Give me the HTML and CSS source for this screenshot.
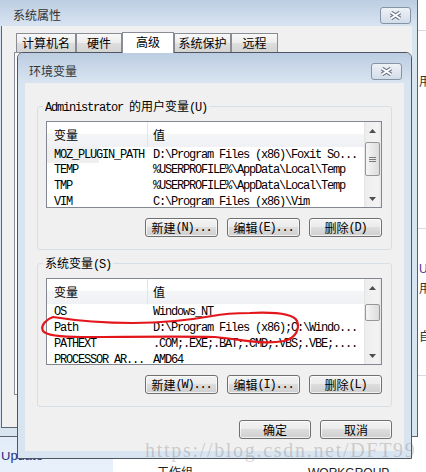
FILE: index.html
```html
<!DOCTYPE html>
<html lang="zh-CN">
<head>
<meta charset="utf-8">
<title>环境变量</title>
<link rel="stylesheet" href="styles.css">
</head>
<body>
<div class="backdrop">
  <div class="bd-top">
    <div class="peek">
      <div class="pk-line l1"></div>
      <div class="pk f1">用</div>
      <div class="pk-line l2"></div>
      <div class="pk f2">U</div>
      <div class="pk f3">用</div>
      <div class="pk f4">自</div>
      <div class="pk-line l3"></div>
    </div>
  </div>
  <div class="bd-bottom">
    <div class="nav"><div class="upd"><span>Update</span></div></div>
    <div class="main-area"><span class="wg-l">工作组</span><span class="wg-v">WORKGROUP</span></div>
  </div>
</div>

<div class="win outer">
  <div class="titlebar">
    <span class="title">系统属性</span>
    <span class="close"><svg width="13" height="9" viewBox="0 0 13 9"><path d="M2 1.5 L11 7.5 M11 1.5 L2 7.5" stroke="#6a7587" stroke-width="4"/><path d="M2 1.5 L11 7.5 M11 1.5 L2 7.5" stroke="#fff" stroke-width="2"/></svg></span>
  </div>
  <div class="client oc">
    <div class="tabs">
      <span class="tab t1">计算机名</span>
      <span class="tab t2">硬件</span>
      <span class="tab sel">高级</span>
      <span class="tab t4">系统保护</span>
      <span class="tab t5">远程</span>
    </div>
    <div class="pane"></div>
  </div>
</div>

<div class="win inner">
  <div class="titlebar">
    <span class="title">环境变量</span>
    <span class="close"><svg width="13" height="9" viewBox="0 0 13 9"><path d="M2 1.5 L11 7.5 M11 1.5 L2 7.5" stroke="#6a7587" stroke-width="4"/><path d="M2 1.5 L11 7.5 M11 1.5 L2 7.5" stroke="#fff" stroke-width="2"/></svg></span>
  </div>
  <div class="client ic">
    <div class="group">
      <div class="legend"><span class="m">Administrator </span>的用户变量<span class="m">(U)</span></div>
      <div class="list">
        <div class="lv">
          <div class="hdr"><span class="c1">变量</span><span class="c2">值</span></div>
          <div class="row sel"><span class="c1 m">MOZ_PLUGIN_PATH</span><span class="c2 m">D:\Program Files (x86)\Foxit So...</span></div>
          <div class="row"><span class="c1 m">TEMP</span><span class="c2 m">%USERPROFILE%\AppData\Local\Temp</span></div>
          <div class="row"><span class="c1 m">TMP</span><span class="c2 m">%USERPROFILE%\AppData\Local\Temp</span></div>
          <div class="row"><span class="c1 m">VIM</span><span class="c2 m">C:\Program Files (x86)\Vim</span></div>
        </div>
        <div class="sb">
          <div class="arr"><svg width="7" height="4" viewBox="0 0 7 4"><path d="M0 4 L3.5 0 L7 4Z" fill="#4f4f4f"/></svg></div>
          <div class="thumb th1"><svg width="7" height="5" viewBox="0 0 7 5"><path d="M0 0.5H7M0 2.5H7M0 4.5H7" stroke="#7a7a7a" stroke-width="1"/></svg></div>
          <div class="sp"></div>
          <div class="arr"><svg width="7" height="4" viewBox="0 0 7 4"><path d="M0 0 L3.5 4 L7 0Z" fill="#4f4f4f"/></svg></div>
        </div>
      </div>
      <div class="btns">
        <span class="btn">新建<span class="m">(N)...</span></span>
        <span class="btn">编辑<span class="m">(E)...</span></span>
        <span class="btn">删除<span class="m">(D)</span></span>
      </div>
    </div>

    <div class="group">
      <div class="legend">系统变量<span class="m">(S)</span></div>
      <div class="list">
        <div class="lv">
          <div class="hdr"><span class="c1">变量</span><span class="c2">值</span></div>
          <div class="row"><span class="c1 m">OS</span><span class="c2 m">Windows_NT</span></div>
          <div class="row"><span class="c1 m">Path</span><span class="c2 m">D:\Program Files (x86);C:\Windo...</span></div>
          <div class="row"><span class="c1 m">PATHEXT</span><span class="c2 m">.COM;.EXE;.BAT;.CMD;.VBS;.VBE;....</span></div>
          <div class="row"><span class="c1 m">PROCESSOR_AR...</span><span class="c2 m">AMD64</span></div>
        </div>
        <div class="sb">
          <div class="arr"><svg width="7" height="4" viewBox="0 0 7 4"><path d="M0 4 L3.5 0 L7 4Z" fill="#4f4f4f"/></svg></div>
          <div class="thumb th2"></div>
          <div class="sp"></div>
          <div class="arr"><svg width="7" height="4" viewBox="0 0 7 4"><path d="M0 0 L3.5 4 L7 0Z" fill="#4f4f4f"/></svg></div>
        </div>
      </div>
      <div class="btns">
        <span class="btn">新建<span class="m">(W)...</span></span>
        <span class="btn">编辑<span class="m">(I)...</span></span>
        <span class="btn">删除<span class="m">(L)</span></span>
      </div>
    </div>

    <div class="foot">
      <span class="btn">确定</span>
      <span class="btn">取消</span>
    </div>
  </div>
</div>

<svg class="scribble" width="426" height="472" viewBox="0 0 426 472">
  <path d="M53 317 C47 319 40 325 43 331 C47 336 62 337 82 337 C120 337 180 336 215 337 C240 339 262 345 284 341 C296 338 300 329 297 321 C293 313 272 312 250 313 C232 313 222 314 212 316 C190 320 160 323 133 323 C100 323 72 320 53 317" fill="none" stroke="#e3161c" stroke-width="2.2" stroke-linecap="round"/>
</svg>

<div class="wm">https://blog.csdn.net/DFT99</div>
</body>
</html>
```

FILE: styles.css
```css
* { box-sizing: border-box; }
html, body { margin: 0; padding: 0; }
body {
  width: 426px;
  height: 472px;
  overflow: hidden;
  position: relative;
  background: #fff;
  font-family: "Noto Sans CJK SC", "Liberation Sans", sans-serif;
  font-size: 12px;
  color: #000;
}
.m {
  font-family: "Liberation Mono", "Noto Sans CJK SC", monospace;
  font-size: 12px;
  letter-spacing: -1.2px;
}

/* background window */
.backdrop { position: absolute; inset: 0; display: flex; flex-direction: column; }
.bd-top { height: 437px; display: flex; justify-content: flex-end; }
.peek { width: 8px; display: flex; flex-direction: column; overflow: hidden; padding-left: 1px; }
.pk-line { height: 1px; background: #d3dae3; margin-left: -1px; }
.pk { font-size: 12px; line-height: 12px; white-space: nowrap; color: #333; }
.l1 { margin-top: 30px; }
.f1 { margin-top: 44px; }
.l2 { margin-top: 141px; }
.f2 { margin-top: 34px; color: #4a3a8a; font-family: "Liberation Sans", sans-serif; }
.f3 { margin-top: 7px; }
.f4 { margin-top: 36px; }
.l3 { margin-top: 33px; }
.bd-bottom { height: 35px; display: flex; }
.nav { width: 113px; background: linear-gradient(#e2ecf8, #e8f1fb); }
.upd { margin-top: 15px; height: 20px; overflow: hidden; }
.upd span { display: block; margin-top: -3px; line-height: 13px; font-family: "Liberation Sans", sans-serif; font-size: 13px; color: #26307e; padding-left: 1px; }
.main-area { flex: 1; display: flex; align-items: flex-start; padding: 28px 0 0 44px; }
.wg-l { line-height: 14px; color: #222; }
.wg-v { margin: 1px 0 0 115px; line-height: 14px; font-family: "Liberation Sans", sans-serif; font-size: 12px; color: #222; }

/* windows */
.win {
  position: absolute;
  border: 1px solid #59616d;
  background: #d9e4f1;
  display: flex;
  flex-direction: column;
}
.titlebar {
  flex-shrink: 0;
  display: flex;
  justify-content: space-between;
  align-items: flex-start;
  background: linear-gradient(#bccde2, #d9e4f1);
}
.title { line-height: 16px; color: #333; }
.close {
  width: 31px;
  height: 17px;
  border: 1px solid #8593a6;
  border-radius: 3px;
  background: linear-gradient(#eef2f7, #d3dce8);
  display: flex;
  align-items: center;
  justify-content: center;
}
.client { background: #f0f0f0; flex: 1; display: flex; flex-direction: column; }

.outer { left: -5px; top: -1px; width: 423px; height: 438px; }
.outer .titlebar { height: 26px; padding: 7px 6px 0 17px; }
.oc {
  margin: 0 5px 8px;
  padding: 6px 0 0 12px;
  border-left: 1px solid #5e6672;
  border-bottom: 1px solid #5e6672;
}
.tabs { display: flex; align-items: flex-end; height: 20px; margin-left: 2px; }
.tab {
  height: 19px;
  border: 1px solid #898c95;
  border-bottom: none;
  background: linear-gradient(#f8f8f8, #ececec 50%, #dedede 51%, #d4d4d4);
  display: flex;
  align-items: center;
  justify-content: center;
  line-height: 14px;
  color: #000;
}
.t1 { width: 60px; }
.t2 { width: 46px; }
.sel { width: 52px; height: 21px; margin-bottom: -1px; background: #fff; position: relative; z-index: 1; padding-bottom: 2px; }
.t4 { width: 57px; }
.t5 { width: 47px; }
.pane { height: 343px; border: 1px solid #898c95; background: #fcfcfc; margin-right: 6px; }

.inner { left: 17px; top: 52px; width: 395px; height: 407px; border-radius: 6px 6px 0 0; border-color: #4e5661; }
.inner .titlebar { height: 30px; padding: 10px 9px 0 11px; border-radius: 5px 5px 0 0; }
.ic { margin: 0 7px 7px; padding: 23px 12px 12px; }

.group {
  border: 1px solid #d5dfe5;
  border-radius: 3px;
  padding: 0 9px 12px 8px;
  display: flex;
  flex-direction: column;
}
.group + .group { margin-top: 13px; }
.legend {
  align-self: flex-start;
  margin: -8px 0 0 -3px;
  padding: 0 2px;
  height: 14px;
  line-height: 14px;
  background: #f0f0f0;
  white-space: nowrap;
}
.list {
  margin-top: 8px;
  height: 87px;
  border: 1px solid #828790;
  background: #fff;
  display: flex;
}
.lv { flex: 1; min-width: 0; overflow: hidden; }
.hdr {
  height: 25px;
  display: flex;
  background: linear-gradient(#fff, #fff 45%, #f4f5f7 50%, #eff1f4);
}
.hdr .c1 { width: 101px; border-right: 1px solid #e2e4e8; padding-left: 7px; display: flex; align-items: center; }
.hdr .c2 { padding-left: 5px; display: flex; align-items: center; }
.row { height: 16px; line-height: 16px; display: flex; white-space: nowrap; }
.row.sel { background: #efefef; }
.row .c1 { width: 101px; flex-shrink: 0; padding-left: 7px; overflow: hidden; }
.row .c2 { padding-left: 5px; }

.sb {
  width: 17px;
  flex-shrink: 0;
  display: flex;
  flex-direction: column;
  background: linear-gradient(to right, #e3e3e3, #eeeeee 2px, #f3f3f3 14px, #e8e8e8);
}
.arr { height: 17px; flex-shrink: 0; display: flex; align-items: center; justify-content: center; }
.thumb {
  margin: 0 1px;
  border: 1px solid #979797;
  border-radius: 2px;
  background: linear-gradient(to right, #f5f5f5, #e9e9e9 50%, #dcdcdc);
  display: flex;
  align-items: center;
  justify-content: center;
  flex-shrink: 0;
}
.th1 { margin-top: 3px; height: 34px; }
.th2 { margin-top: 8px; height: 17px; }
.sp { flex: 1; }

.btns, .foot { display: flex; justify-content: flex-end; gap: 9px; }
.btns { margin-top: 10px; }
.foot { margin-top: 13px; }
.btn {
  width: 73px;
  height: 19px;
  border: 1px solid #707070;
  border-radius: 3px;
  background: linear-gradient(#f3f3f3, #ebebeb 45%, #dddddd 50%, #cfcfcf);
  box-shadow: inset 0 0 0 1px rgba(255, 255, 255, 0.7);
  display: flex;
  align-items: center;
  justify-content: center;
  line-height: 14px;
  white-space: nowrap;
}
.foot .btn { width: 72px; }

.scribble { position: absolute; left: 0; top: 0; pointer-events: none; }
.wm {
  position: absolute;
  left: 145px;
  top: 440px;
  font-family: "Liberation Serif", serif;
  font-size: 20px;
  line-height: 20px;
  letter-spacing: 1.7px;
  color: rgba(110, 110, 110, 0.3);
  white-space: nowrap;
  pointer-events: none;
}
```
